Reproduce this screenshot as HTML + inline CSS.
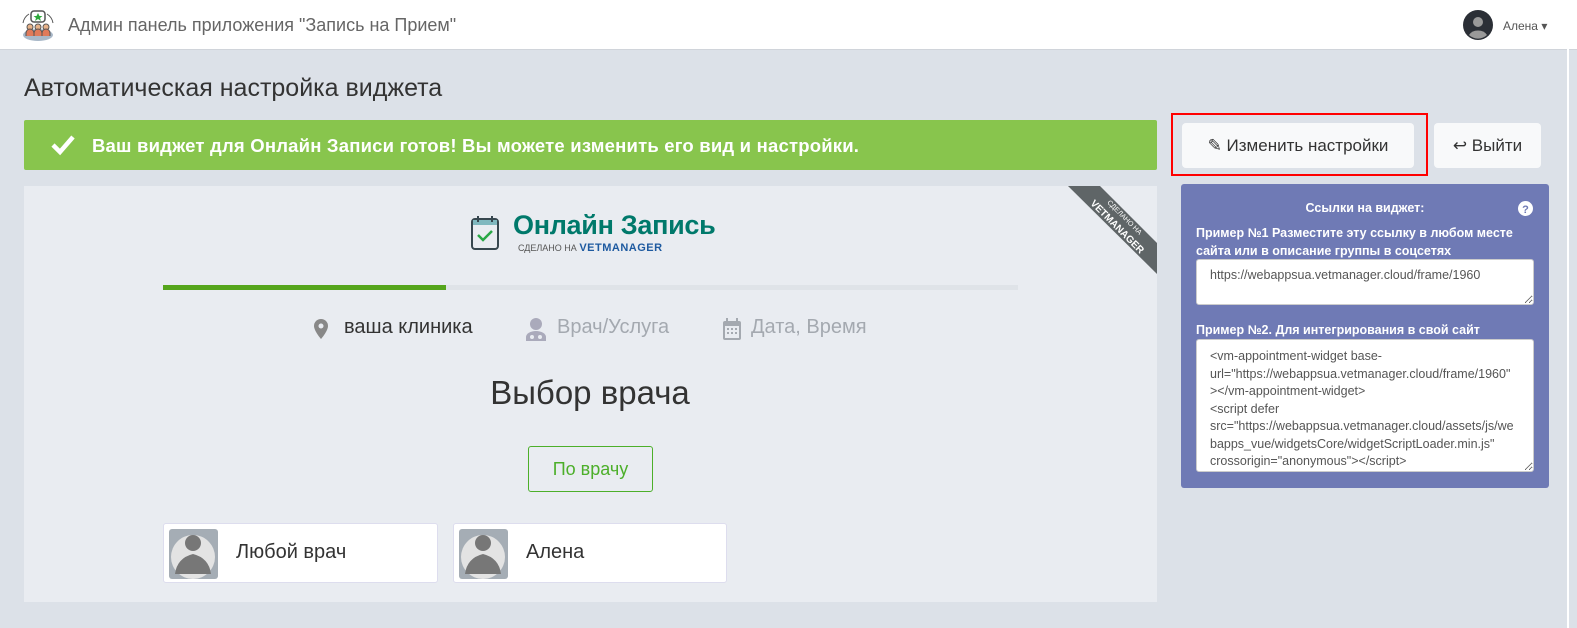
<!DOCTYPE html>
<html><head><meta charset="utf-8"><style>
*{box-sizing:border-box;margin:0;padding:0}
body{width:1577px;height:628px;background:#dce1e8;font-family:"Liberation Sans",sans-serif;position:relative;overflow:hidden;color:#333}
.a{position:absolute}
.hdr{left:0;top:0;width:1577px;height:50px;background:#fff;border-bottom:1px solid #d0d4da}
.ta{font-size:14px;color:#fff;font-weight:bold}
textarea{font-family:"Liberation Sans",sans-serif;border:1px solid #ccc;border-radius:3px;background:#fff;resize:both;font-size:12.5px;color:#555;line-height:19px;padding:6px 10px 6px 13px;overflow:hidden}
</style></head><body>
<div class="a hdr"></div>
<div class="a" style="right:8px;top:0;width:2px;height:628px;background:#fff"></div>
<svg class="a" style="left:20px;top:9px" width="36" height="34" viewBox="0 0 36 34">
<ellipse cx="18" cy="26" rx="15" ry="6" fill="#a9b8c8"/>
<rect x="11" y="2" width="14" height="11" rx="3" fill="#fff" stroke="#555" stroke-width="1.5"/>
<path d="M18 4l1.5 3h3l-2.5 2 1 3-3-2-3 2 1-3-2.5-2h3z" fill="#2eaa3c"/>
<circle cx="10" cy="18" r="3" fill="#e8b38a" stroke="#555"/><circle cx="18" cy="18" r="3" fill="#e8b38a" stroke="#555"/><circle cx="26" cy="18" r="3" fill="#e8b38a" stroke="#555"/>
<path d="M6 27v-3a4 4 0 0 1 8 0v3M14 27v-3a4 4 0 0 1 8 0v3M22 27v-3a4 4 0 0 1 8 0v3" fill="#e07a5a" stroke="#555"/>
<path d="M3 14a13 13 0 0 1 6-9M33 14a13 13 0 0 0-6-9" stroke="#555" fill="none"/>
</svg>
<div class="a" style="left:68px;top:15px;font-size:18px;color:#666">Админ панель приложения "Запись на Прием"</div>
<svg class="a" style="left:1463px;top:10px" width="30" height="30"><circle cx="15" cy="15" r="15" fill="#2b2f36"/><circle cx="15" cy="12" r="5" fill="#999"/><path d="M6 25a10 8 0 0 1 18 0a13 13 0 0 1-18 0z" fill="#999"/></svg>
<div class="a" style="left:1503px;top:19px;font-size:12px;color:#555">Алена ▾</div>
<div class="a" style="left:24px;top:74px;font-size:25px;color:#333">Автоматическая настройка виджета</div>
<div class="a" style="left:24px;top:120px;width:1133px;height:50px;background:#88c54d;border-radius:2px"></div>
<svg class="a" style="left:50px;top:134px" width="26" height="22"><path d="M3 11l7 7 13-15" stroke="#fff" stroke-width="4.5" fill="none"/></svg>
<div class="a" style="left:92px;top:135px;font-size:18.5px;font-weight:bold;color:#fff;letter-spacing:0.2px">Ваш виджет для Онлайн Записи готов! Вы можете изменить его вид и настройки.</div>
<div class="a" style="left:1171px;top:113px;width:257px;height:63px;border:2px solid #f00"></div>
<div class="a" style="left:1182px;top:123px;width:232px;height:45px;background:#f8f9fa;border-radius:4px;font-size:17px;color:#333;text-align:center;line-height:45px">✎ Изменить настройки</div>
<div class="a" style="left:1434px;top:123px;width:107px;height:45px;background:#f8f9fa;border-radius:4px;font-size:17px;color:#333;text-align:center;line-height:45px">↩ Выйти</div>
<div class="a" style="left:24px;top:186px;width:1133px;height:416px;background:#e9ecf1"></div>
<svg class="a" style="left:1060px;top:186px" width="97" height="90"><polygon points="8,0 40,0 97,57 97,88" fill="#5f6567"/>
<text transform="translate(63,33) rotate(45)" font-size="7" fill="#fff" font-family="Liberation Sans" text-anchor="middle">СДЕЛАНО НА</text>
<text transform="translate(55,43) rotate(45)" font-size="10" font-weight="bold" fill="#fff" font-family="Liberation Sans" text-anchor="middle">VETMANAGER</text></svg>
<svg class="a" style="left:470px;top:214px" width="30" height="38"><rect x="2" y="5" width="26" height="30" rx="3" fill="#e9ecf1" stroke="#37474f" stroke-width="2"/><rect x="3" y="6" width="24" height="5" fill="#80b8bf"/><path d="M8 2v6M22 2v6" stroke="#37474f" stroke-width="2"/><path d="M8 21l5 5 9-9" stroke="#28a745" stroke-width="2.5" fill="none"/></svg>
<div class="a" style="left:513px;top:210px;font-size:27px;font-weight:bold;color:#00796b;letter-spacing:-0.3px">Онлайн Запись</div>
<div class="a" style="left:518px;top:242px;font-size:9px;color:#555">СДЕЛАНО НА <b style="font-size:11px;color:#1e5aa0;letter-spacing:0.5px">VETMANAGER</b></div>
<div class="a" style="left:163px;top:285px;width:855px;height:5px;background:#dfe3e8"></div>
<div class="a" style="left:163px;top:285px;width:283px;height:5px;background:#55a51c"></div>
<svg class="a" style="left:313px;top:318px" width="16" height="22"><path d="M8 1a7 7 0 0 0-7 7c0 5 7 13 7 13s7-8 7-13a7 7 0 0 0-7-7z" fill="#888"/><circle cx="8" cy="8" r="2.5" fill="#e9ecf1"/></svg>
<div class="a" style="left:344px;top:316px;font-size:20px;color:#333">ваша клиника</div>
<svg class="a" style="left:525px;top:317px" width="22" height="24"><circle cx="11" cy="7" r="6" fill="#aab"/><path d="M1 24v-4a10 6 0 0 1 20 0v4z" fill="#aab"/><circle cx="7" cy="20" r="2" fill="#e9ecf1"/><circle cx="15" cy="20" r="2" fill="#e9ecf1"/></svg>
<div class="a" style="left:557px;top:316px;font-size:20px;color:#a4a9b0">Врач/Услуга</div>
<svg class="a" style="left:722px;top:317px" width="20" height="24"><rect x="1" y="4" width="18" height="19" rx="2" fill="#a4a9b0"/><rect x="3" y="9" width="14" height="12" fill="#e9ecf1"/><path d="M5 1v5M15 1v5" stroke="#a4a9b0" stroke-width="2"/><g fill="#a4a9b0"><rect x="5" y="11" width="2" height="2"/><rect x="9" y="11" width="2" height="2"/><rect x="13" y="11" width="2" height="2"/><rect x="5" y="15" width="2" height="2"/><rect x="9" y="15" width="2" height="2"/><rect x="13" y="15" width="2" height="2"/></g></svg>
<div class="a" style="left:751px;top:316px;font-size:20px;color:#a4a9b0">Дата, Время</div>
<div class="a" style="left:390px;top:374px;width:400px;text-align:center;font-size:33px;color:#333">Выбор врача</div>
<div class="a" style="left:528px;top:446px;width:125px;height:46px;border:1px solid #4caf2a;border-radius:3px;color:#4caf2a;font-size:18px;text-align:center;line-height:44px">По врачу</div>
<div class="a" style="left:163px;top:523px;width:275px;height:60px;background:#fff;border:1px solid #dde;border-radius:3px"></div>
<div class="a" style="left:453px;top:523px;width:274px;height:60px;background:#fff;border:1px solid #dde;border-radius:3px"></div>
<svg class="a" style="left:169px;top:529px" width="49" height="50"><rect width="49" height="50" rx="3" fill="#a5adb5"/><circle cx="24" cy="28" r="22" fill="#e3e3e3"/><circle cx="24" cy="14" r="8" fill="#777"/><path d="M6 45q2-16 18-20q16 4 18 20z" fill="#777"/></svg>
<svg class="a" style="left:459px;top:529px" width="49" height="50"><rect width="49" height="50" rx="3" fill="#a5adb5"/><circle cx="24" cy="28" r="22" fill="#e3e3e3"/><circle cx="24" cy="14" r="8" fill="#777"/><path d="M6 45q2-16 18-20q16 4 18 20z" fill="#777"/></svg>
<div class="a" style="left:236px;top:541px;font-size:20px;color:#333">Любой врач</div>
<div class="a" style="left:526px;top:541px;font-size:20px;color:#333">Алена</div>
<div class="a" style="left:1181px;top:184px;width:368px;height:304px;background:#6f7ab5;border-radius:3px"></div>
<div class="a ta" style="left:1181px;top:201px;width:368px;text-align:center;font-size:12.5px">Ссылки на виджет:</div>
<svg class="a" style="left:1518px;top:201px" width="15" height="15"><circle cx="7.5" cy="7.5" r="7.5" fill="#fff"/><text x="7.5" y="12" font-size="11" font-weight="bold" text-anchor="middle" fill="#6f7ab5" font-family="Liberation Sans">?</text></svg>
<div class="a ta" style="left:1196px;top:224px;width:345px;font-size:12.5px;line-height:18px">Пример №1 Разместите эту ссылку в любом месте сайта или в описание группы в соцсетях</div>
<textarea class="a" style="left:1196px;top:259px;width:338px;height:46px">https://webappsua.vetmanager.cloud/frame/1960</textarea>
<div class="a ta" style="left:1196px;top:323px;font-size:12.5px">Пример №2. Для интегрирования в свой сайт</div>
<textarea class="a" style="left:1196px;top:339px;width:338px;height:133px;line-height:17.5px;padding-top:8px;padding-right:14px">&lt;vm-appointment-widget base-url="https://webappsua.vetmanager.cloud/frame/1960" &gt;&lt;/vm-appointment-widget&gt;
&lt;script defer src="https://webappsua.vetmanager.cloud/assets/js/webapps_vue/widgetsCore/widgetScriptLoader.min.js" crossorigin="anonymous"&gt;&lt;/script&gt;</textarea>
</body></html>
